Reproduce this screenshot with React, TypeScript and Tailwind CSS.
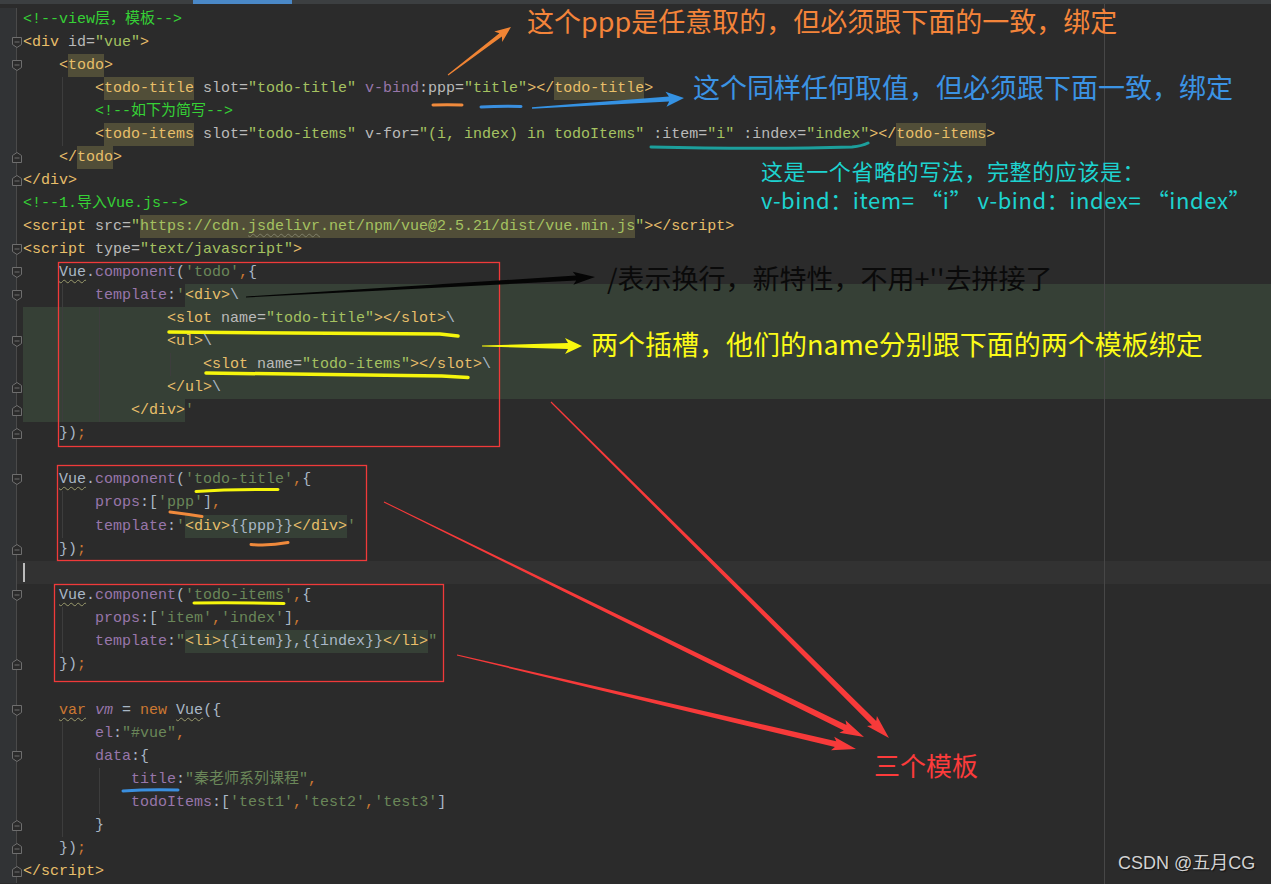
import React from "react";

type Tok = [string, string];
type Row = {
  t: Tok[];
  bg?: string;
  fill?: string;
  fold?: "o" | "c";
  g?: number[];
  cur?: boolean;
};

// darcula-ish token colours
const tag = "text-[#e8bf6a]";
const tagHl = "text-[#e8bf6a] bg-[#514e38]";
const attr = "text-[#bababa]";
const val = "text-[#a5c261]";
const pur = "text-[#9876aa]";
const com = "text-[#36d136]";
const def = "text-[#a9b7c6]";
const str = "text-[#6a8759]";
const kw = "text-[#cc7832]";
const inj = "bg-[#364036]";
const tagInj = "text-[#e8bf6a] bg-[#364036]";
const defInj = "text-[#a9b7c6] bg-[#364036]";
const url = "text-[#a5c261] bg-[#514e38]";
const urlWavy =
  "text-[#a5c261] bg-[#514e38] underline decoration-wavy decoration-1 decoration-[#7f7f68] underline-offset-[3px]";
const wavy =
  "text-[#a9b7c6] underline decoration-wavy decoration-1 decoration-[#9a9a6c] underline-offset-[3px]";
const kwWavy =
  "text-[#cc7832] underline decoration-wavy decoration-1 decoration-[#9a9a6c] underline-offset-[3px]";
const vmCls = "text-[#9876aa] italic";

const guideCls: Record<number, string> = {
  62: "left-[62px]",
  99: "left-[99px]",
  170: "left-[170px]",
};

const rows: Row[] = [
  { t: [["<!--view层，模板-->", com]] },
  { fold: "o", t: [["<div", tag], [" id=", attr], ['"vue"', val], [">", tag]] },
  { fold: "o", t: [["    <", tag], ["todo", tagHl], [">", tag]] },
  {
    g: [62],
    t: [
      ["        <", tag],
      ["todo-title", tagHl],
      [" slot=", attr],
      ['"todo-title"', val],
      [" v-bind", pur],
      [":ppp=", attr],
      ['"title"', val],
      ["></", tag],
      ["todo-title", tagHl],
      [">", tag],
    ],
  },
  { g: [62], t: [["        ", def], ["<!--如下为简写-->", com]] },
  {
    g: [62],
    t: [
      ["        <", tag],
      ["todo-items", tagHl],
      [" slot=", attr],
      ['"todo-items"', val],
      [" v-for=", attr],
      ['"(i, index) in todoItems"', val],
      [" :item=", attr],
      ['"i"', val],
      [" :index=", attr],
      ['"index"', val],
      ["></", tag],
      ["todo-items", tagHl],
      [">", tag],
    ],
  },
  { fold: "c", t: [["    </", tag], ["todo", tagHl], [">", tag]] },
  { fold: "c", t: [["</div>", tag]] },
  { t: [["<!--1.导入Vue.js-->", com]] },
  {
    t: [
      ["<script", tag],
      [" src=", attr],
      ['"', val],
      ["https://cdn.", url],
      ["jsdelivr", urlWavy],
      [".net/npm/vue@2.5.21/dist/vue.min.js", url],
      ['"', val],
      ["></script>", tag],
    ],
  },
  {
    fold: "o",
    t: [["<script", tag], [" type=", attr], ['"text/javascript"', val], [">", tag]],
  },
  {
    fold: "o",
    t: [
      ["    ", def],
      ["Vue", wavy],
      [".", def],
      ["component", pur],
      ["(", def],
      ["'todo'", str],
      [",", kw],
      ["{", def],
    ],
  },
  {
    fold: "o",
    g: [62],
    fill: inj,
    t: [
      ["        ", def],
      ["template", pur],
      [":", def],
      ["'", str],
      ["<div>", tagInj],
      ["\\", defInj],
    ],
  },
  {
    bg: inj,
    g: [62, 99],
    t: [
      ["                <slot", tag],
      [" name=", attr],
      ['"todo-title"', val],
      ["></slot>", tag],
      ["\\", def],
    ],
  },
  { fold: "o", bg: inj, g: [62, 99], t: [["                <ul>", tag], ["\\", def]] },
  {
    bg: inj,
    g: [62, 99, 170],
    t: [
      ["                    <slot", tag],
      [" name=", attr],
      ['"todo-items"', val],
      ["></slot>", tag],
      ["\\", def],
    ],
  },
  { fold: "c", bg: inj, g: [62, 99], t: [["                </ul>", tag], ["\\", def]] },
  { fold: "c", g: [62, 99], t: [["            </div>", tagInj], ["'", str]] },
  { fold: "c", t: [["    })", def], [";", kw]] },
  { t: [] },
  {
    fold: "o",
    t: [
      ["    ", def],
      ["Vue", wavy],
      [".", def],
      ["component", pur],
      ["(", def],
      ["'todo-title'", str],
      [",", kw],
      ["{", def],
    ],
  },
  {
    g: [62],
    t: [["        ", def], ["props", pur], [":[", def], ["'ppp'", str], ["]", def], [",", kw]],
  },
  {
    g: [62],
    t: [
      ["        ", def],
      ["template", pur],
      [":", def],
      ["'", str],
      ["<div>", tagInj],
      ["{{ppp}}", defInj],
      ["</div>", tagInj],
      ["'", str],
    ],
  },
  { fold: "c", t: [["    })", def], [";", kw]] },
  { cur: true, t: [] },
  {
    fold: "o",
    t: [
      ["    ", def],
      ["Vue", wavy],
      [".", def],
      ["component", pur],
      ["(", def],
      ["'todo-items'", str],
      [",", kw],
      ["{", def],
    ],
  },
  {
    g: [62],
    t: [
      ["        ", def],
      ["props", pur],
      [":[", def],
      ["'item'", str],
      [",", kw],
      ["'index'", str],
      ["]", def],
      [",", kw],
    ],
  },
  {
    g: [62],
    t: [
      ["        ", def],
      ["template", pur],
      [":", def],
      ['"', str],
      ["<li>", tagInj],
      ["{{item}},{{index}}", defInj],
      ["</li>", tagInj],
      ['"', str],
    ],
  },
  { fold: "c", t: [["    })", def], [";", kw]] },
  { t: [] },
  {
    fold: "o",
    t: [
      ["    ", def],
      ["var", kwWavy],
      [" ", def],
      ["vm", vmCls],
      [" = ", def],
      ["new", kw],
      [" ", def],
      ["Vue", wavy],
      ["({", def],
    ],
  },
  { g: [62], t: [["        ", def], ["el", pur], [":", def], ['"#vue"', str], [",", kw]] },
  { fold: "o", g: [62], t: [["        ", def], ["data", pur], [":{", def]] },
  {
    g: [62, 99],
    t: [["            ", def], ["title", pur], [":", def], ['"秦老师系列课程"', str], [",", kw]],
  },
  {
    g: [62, 99],
    t: [
      ["            ", def],
      ["todoItems", pur],
      [":[", def],
      ["'test1'", str],
      [",", kw],
      ["'test2'", str],
      [",", kw],
      ["'test3'", str],
      ["]", def],
    ],
  },
  { fold: "c", g: [62], t: [["        }", def]] },
  { fold: "c", t: [["    })", def], [";", kw]] },
  { fold: "c", t: [["</script>", tag]] },
];

const FoldMark: React.FC<{ kind: "o" | "c" }> = ({ kind }) => (
  <svg
    width="12"
    height="13"
    viewBox="0 0 12 13"
    className="absolute left-[11px] top-[5px]"
    fill="#2b2b2b"
    stroke="#6e6e6e"
    strokeWidth="1"
  >
    {kind === "o" ? (
      <path d="M1.5 1.5H10.5V8.5L6 11.5L1.5 8.5Z" />
    ) : (
      <path d="M1.5 4.5L6 1.5L10.5 4.5V11.5H1.5Z" />
    )}
    <path d={kind === "o" ? "M3.5 6H8.5" : "M3.5 7H8.5"} />
  </svg>
);

const CodeRow: React.FC<{ row: Row }> = ({ row }) => (
  <div className={"relative flex h-[23.06px] " + (row.cur ? "bg-[#323232]" : "")}>
    <div className="w-[17px] shrink-0 bg-[#313335] border-r border-[#4a4a4a]" />
    <div className={"ml-[6px] flex flex-1 " + (row.bg ?? "")}>
      {row.cur && <span className="w-[2px] my-[2px] bg-[#bbbbbb]" />}
      {row.t.map(([text, cls], i) => (
        <span key={i} className={cls}>
          {text}
        </span>
      ))}
      {row.fill && <span className={"flex-1 " + row.fill} />}
    </div>
    {row.g?.map((x) => (
      <span key={x} className={"absolute top-0 bottom-0 w-px bg-[#3d3d3d] " + guideCls[x]} />
    ))}
    {row.fold && <FoldMark kind={row.fold} />}
  </div>
);

// tapered annotation arrow (thin tail, thick near the head)
function arrow(
  x1: number,
  y1: number,
  x2: number,
  y2: number,
  w0: number,
  w1: number,
  hl: number,
  hw: number
) {
  const dx = x2 - x1;
  const dy = y2 - y1;
  const L = Math.hypot(dx, dy);
  const ux = dx / L;
  const uy = dy / L;
  const nx = -uy;
  const ny = ux;
  const bx = x2 - ux * hl;
  const by = y2 - uy * hl;
  const bx2 = x2 - ux * (hl - 3);
  const by2 = y2 - uy * (hl - 3);
  const p = (x: number, y: number) => `${x.toFixed(1)},${y.toFixed(1)}`;
  return [
    p(x1 + (nx * w0) / 2, y1 + (ny * w0) / 2),
    p(bx2 + (nx * w1) / 2, by2 + (ny * w1) / 2),
    p(bx + (nx * hw) / 2, by + (ny * hw) / 2),
    p(x2, y2),
    p(bx - (nx * hw) / 2, by - (ny * hw) / 2),
    p(bx2 - (nx * w1) / 2, by2 - (ny * w1) / 2),
    p(x1 - (nx * w0) / 2, y1 - (ny * w0) / 2),
  ].join(" ");
}

const Annotations: React.FC = () => (
  <svg width="1271" height="884" className="absolute left-0 top-0 pointer-events-none">
    {/* red boxes */}
    <g fill="none" stroke="#f03a3a" strokeWidth="1.3">
      <rect x="58.5" y="262.5" width="441" height="184" />
      <rect x="57.5" y="465.5" width="309" height="95" />
      <rect x="54.5" y="584.5" width="389" height="97" />
    </g>

    {/* hand drawn underlines */}
    <g fill="none" strokeLinecap="round" strokeWidth="3">
      <path d="M433 105 Q447 104.5 462 105" stroke="#f08a3c" />
      <path d="M481 107 Q500 106 521 106.5" stroke="#3a8fdf" />
      <path d="M651 147 Q760 149.5 852 147 Q862 146 868 143" stroke="#1c9f9c" />
      <path d="M169 332 Q300 333.5 440 334 L458 336" stroke="#f6f60c" strokeWidth="3.5" />
      <path d="M206 373 Q330 375 442 376 L468 377.5" stroke="#f6f60c" strokeWidth="3.5" />
      <path d="M196 491.5 Q230 489 278 489.5" stroke="#f6f60c" />
      <path d="M170 512 Q186 514 202 516.5" stroke="#f08a3c" />
      <path d="M251 544.5 Q270 546 288 542.5" stroke="#f08a3c" />
      <path d="M194 603 Q240 602.5 284 603.5" stroke="#f6f60c" />
      <path d="M123 791 Q150 789 178 790" stroke="#3a8fdf" />
    </g>

    {/* arrows */}
    <polygon points={arrow(448, 75, 511, 27, 1, 4, 16, 13)} fill="#f08434" />
    <polygon points={arrow(532, 108, 684, 98, 1.5, 5, 18, 15)} fill="#3592e3" />
    <polygon points={arrow(246, 297, 595, 277, 1, 5, 22, 13)} fill="#050505" />
    <polygon points={arrow(482, 346, 582, 346, 1, 6, 17, 16)} fill="#f8f80e" />
    <polygon points={arrow(551, 402, 889, 738, 1, 6, 24, 14)} fill="#f73a3a" />
    <polygon points={arrow(384, 502, 864, 737, 1, 6, 24, 14)} fill="#f73a3a" />
    <polygon points={arrow(457, 655, 856, 749, 1, 6, 24, 14)} fill="#f73a3a" />
  </svg>
);

const note = "absolute whitespace-nowrap leading-none font-['Noto_Sans_CJK_SC',sans-serif]";

export default function App() {
  return (
    <div className="relative w-[1271px] h-[884px] overflow-hidden bg-[#2b2b2b]">
      {/* tab strip */}
      <div className="flex h-[4px] bg-[#3c3f41]">
        <div className="w-[193px]" />
        <div className="w-[99px] bg-[#4a88c7]" />
      </div>

      {/* editor */}
      <div className="pt-[3.5px] font-['Liberation_Mono','Noto_Sans_CJK_SC',monospace] text-[15px] leading-[23.06px] whitespace-pre">
        {rows.map((r, i) => (
          <CodeRow key={i} row={r} />
        ))}
      </div>

      {/* right margin guide */}
      <div className="absolute left-[1104px] top-[4px] bottom-0 w-px bg-[#474747]" />

      <Annotations />

      <div className={note + " left-[527px] top-[7px] text-[27px] text-[#f4843a]"}>
        这个ppp是任意取的，但必须跟下面的一致，绑定
      </div>
      <div className={note + " left-[693px] top-[73px] text-[27px] text-[#3b93e4]"}>
        这个同样任何取值，但必须跟下面一致，绑定
      </div>
      <div className={note + " left-[761px] top-[159px] text-[22px] tracking-[0.6px] text-[#1dd3d0]"}>
        这是一个省略的写法，完整的应该是：
      </div>
      <div className={note + " left-[761px] top-[188px] text-[22px] tracking-[0.6px] text-[#1dd3d0]"}>
        v-bind：item= “i” v-bind：index= “index”
      </div>
      <div className={note + " left-[607px] top-[264px] text-[27px] text-[#0a0a0a]"}>
        /表示换行，新特性，不用+''去拼接了
      </div>
      <div className={note + " left-[591px] top-[330px] text-[27px] text-[#fbfb18]"}>
        两个插槽，他们的name分别跟下面的两个模板绑定
      </div>
      <div className={note + " left-[874px] top-[752px] text-[26px] text-[#fc3b3b]"}>
        三个模板
      </div>
      <div className="absolute left-[1118px] top-[854px] whitespace-nowrap leading-none text-[18px] text-[#d2d2d2] font-['Liberation_Sans','Noto_Sans_CJK_SC',sans-serif] [text-shadow:1px_1px_1px_#111]">
        CSDN @五月CG
      </div>
    </div>
  );
}
